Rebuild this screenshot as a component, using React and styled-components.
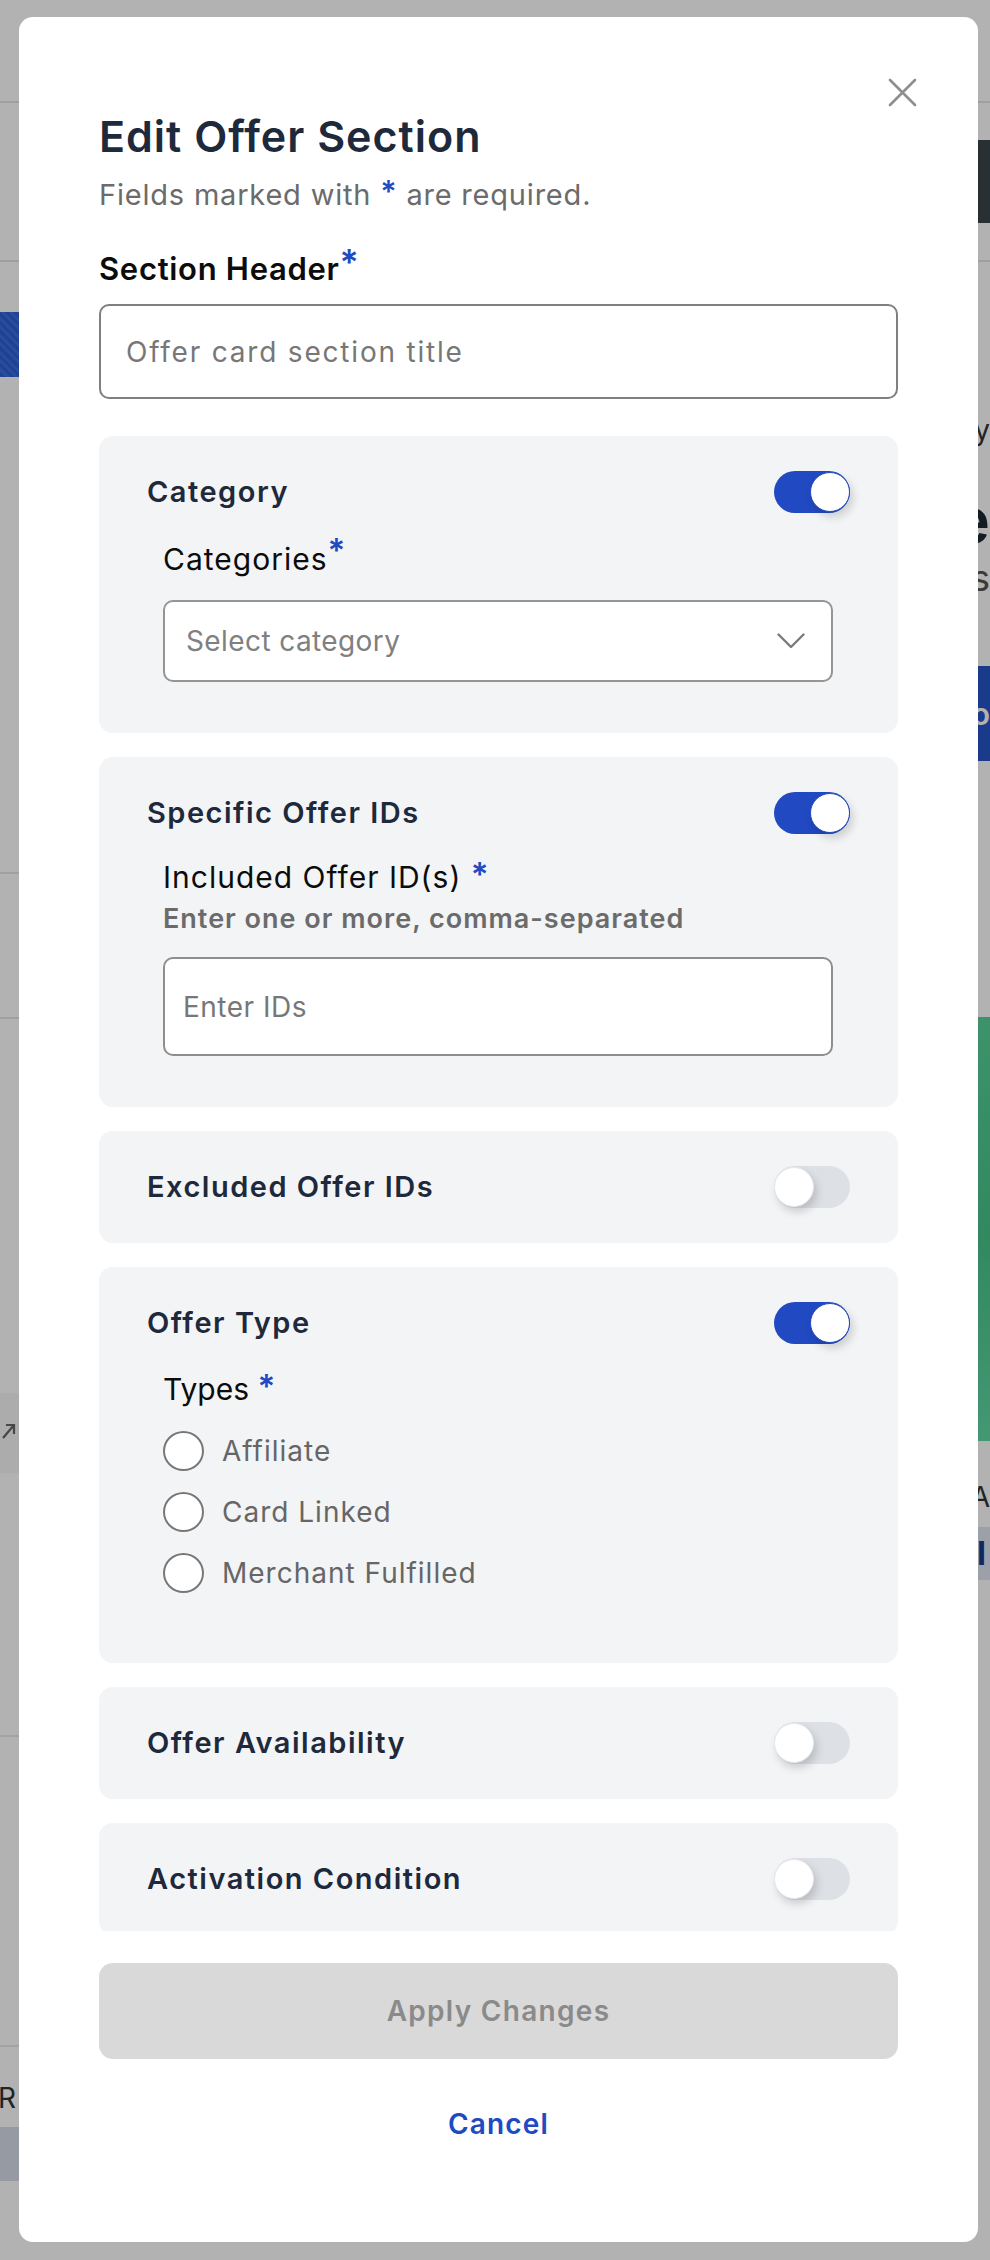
import React from "react"
import styled, { createGlobalStyle } from "styled-components"

const BLUE = "#2149c1"
const INK = "#1e293b"
const MUTED = "#6b6b6b"

const GlobalStyle = createGlobalStyle`
  html, body {
    margin: 0;
    padding: 0;
  }
  body {
    font-family: Inter, "Noto Sans", sans-serif;
    background: #fff;
    overflow: hidden;
  }
  * {
    box-sizing: border-box;
  }
`

/* ---------- the page behind the dialog ---------- */

const Page = styled.div`
  width: 990px;
  height: 2260px;
  overflow: hidden;
  background: #fff;
  display: flex;
  flex-direction: column;
`

const TopNav = styled.header`
  height: 103px;
  flex-shrink: 0;
  border-bottom: 2px solid #e4e4e4;
`

const SubBar = styled.div`
  height: 159px;
  flex-shrink: 0;
  border-bottom: 2px solid #e4e4e4;
  display: flex;
  align-items: center;
  justify-content: flex-end;
`

const DarkPill = styled.div`
  width: 150px;
  height: 83px;
  background: #3a454b;
  border-radius: 10px;
  margin-right: -20px;
`

const Content = styled.main`
  flex: 1;
  display: flex;
  justify-content: space-between;
`

const LeftRail = styled.div`
  width: 160px;
  margin-left: -130px;
  display: flex;
  flex-direction: column;
`

const RightRail = styled.div`
  width: 260px;
  display: flex;
  flex-direction: column;
`

const HeroImage = styled.div`
  margin-top: 50px;
  height: 65px;
  background: repeating-linear-gradient(45deg, #3a6fe2 0 3px, #2f5fd0 3px 6px);
`

const Rule = styled.div`
  margin-top: ${(p) => p.$top}px;
  border-top: 2px solid #e6e6e6;
`

const IconBand = styled.div`
  margin-top: 374px;
  height: 80px;
  background: #f6f6f6;
  display: flex;
  align-items: center;
  justify-content: flex-end;
  padding-right: 14px;
`

const GhostCard = styled.div`
  margin-top: 262px;
  height: 312px;
  border: 2px solid #e8e8e8;
  border-radius: 14px;
`

const RailText = styled.div`
  margin-top: ${(p) => p.$top || 0}px;
  font-size: ${(p) => p.$size}px;
  line-height: ${(p) => p.$lh}px;
  font-weight: ${(p) => p.$weight || 400};
  color: ${(p) => p.$color || "#333"};
  text-align: ${(p) => p.$align || "left"};
  padding-left: ${(p) => p.$indent || 0}px;
  white-space: nowrap;
`

const Chip = styled.div`
  margin-top: 12px;
  height: 54px;
  background: #d7dde9;
  border-radius: 8px;
`

const BlueBlock = styled.div`
  margin-top: 66px;
  height: 95px;
  background: #2653c8;
  border-radius: 10px 0 0 10px;
  color: #fff;
  font-size: 30px;
  font-weight: 600;
  display: flex;
  align-items: center;
  justify-content: flex-end;
`

const GreenImage = styled.div`
  margin-top: 256px;
  height: 424px;
  background: linear-gradient(160deg, #5fd8a0, #48c48a 60%, #62d9a5);
`

const Tag = styled.div`
  margin-top: 15px;
  height: 53px;
  background: #dfe5f2;
  color: #1c3a8f;
  font-size: 32px;
  font-weight: 700;
  display: flex;
  align-items: center;
  justify-content: flex-end;
  padding-right: 4px;
`

/* ---------- dialog ---------- */

const Backdrop = styled.div`
  position: fixed;
  inset: 0;
  background: rgba(0, 0, 0, 0.3);
  padding: 17px 12px 18px 19px;
`

const Dialog = styled.section`
  position: relative;
  width: 959px;
  height: 2225px;
  background: #fff;
  border-radius: 14px;
  padding: 94px 80px 101px;
  display: flex;
  flex-direction: column;
`

const CloseButton = styled.button`
  position: absolute;
  top: 61px;
  right: 61px;
  width: 29px;
  height: 29px;
  padding: 0;
  border: none;
  background: none;
  display: flex;
`

const Title = styled.h2`
  margin: 0;
  font-size: 43px;
  line-height: 50px;
  font-weight: 600;
  letter-spacing: 1px;
  color: ${INK};
`

const Subtitle = styled.p`
  margin: 17px 0 0;
  font-size: 29px;
  line-height: 34px;
  letter-spacing: 0.8px;
  color: ${MUTED};
`

const Req = styled.span`
  color: ${BLUE};
  font-weight: 600;
  font-size: ${(p) => p.$size || "1em"};
  vertical-align: ${(p) => p.$raise || 0}px;
  line-height: 0;
`

const ScrollArea = styled.div`
  flex: 1;
  min-height: 0;
  overflow: hidden;
  padding-top: 39px;
`

const HeaderLabel = styled.label`
  display: block;
  font-size: 31px;
  line-height: 36px;
  font-weight: 600;
  letter-spacing: 0.7px;
  color: #0c0c0c;
`

const TextInput = styled.input`
  display: block;
  width: 100%;
  height: ${(p) => p.$h}px;
  margin-top: ${(p) => p.$top}px;
  padding: 0 ${(p) => p.$pad}px;
  border: 2px solid ${(p) => p.$border || "#7f7f7f"};
  border-radius: 10px;
  background: #fff;
  font-family: inherit;
  font-size: 28px;
  letter-spacing: ${(p) => p.$ls}px;
  color: #111;
  outline: none;

  &::placeholder {
    color: #777;
  }
`

const CardList = styled.div`
  margin-top: 37px;
  display: flex;
  flex-direction: column;
  gap: 24px;
`

const Card = styled.div`
  background: #f3f4f6;
  border-radius: 14px;
  padding: 35px 48px;
`

const CardHead = styled.div`
  height: 42px;
  display: flex;
  align-items: center;
  justify-content: space-between;
`

const CardTitle = styled.h3`
  margin: 0;
  font-size: 29px;
  line-height: 34px;
  font-weight: 600;
  letter-spacing: 1.5px;
  color: ${INK};
`

const Switch = styled.span`
  width: 76px;
  height: 42px;
  border-radius: 21px;
  padding: 1px 0;
  background: ${(p) => (p.$on ? BLUE : "#dde0e5")};
  display: flex;
  align-items: center;
  justify-content: ${(p) => (p.$on ? "flex-end" : "flex-start")};
`

const Knob = styled.span`
  width: 40px;
  height: 40px;
  border-radius: 50%;
  background: #fff;
  border: 1.5px solid ${(p) => (p.$on ? BLUE : "#e6e8ec")};
  box-shadow: 3px 5px 9px rgba(0, 0, 0, 0.16);
`

const CardBody = styled.div`
  margin-top: ${(p) => p.$top}px;
  margin-bottom: ${(p) => p.$tail}px;
  padding: 0 17px 0 16px;
`

const FieldLabel = styled.div`
  font-size: 30px;
  line-height: 34px;
  letter-spacing: ${(p) => p.$ls ?? 1}px;
  color: #0c0c0c;
`

const Helper = styled.div`
  margin-top: 10px;
  font-size: 27px;
  line-height: 30px;
  font-weight: 600;
  letter-spacing: 1px;
  color: ${MUTED};
`

const SelectBox = styled.div`
  margin-top: 24px;
  height: 82px;
  border: 2px solid #959595;
  border-radius: 10px;
  background: #fff;
  padding: 0 26px 0 21px;
  display: flex;
  align-items: center;
  justify-content: space-between;
  font-size: 28px;
  letter-spacing: 0.4px;
  color: #808080;
`

const RadioGroup = styled.div`
  margin-top: 25px;
  display: flex;
  flex-direction: column;
  gap: 21px;
`

const RadioRow = styled.label`
  display: flex;
  align-items: center;
  gap: 18px;
  font-size: 28px;
  line-height: 34px;
  letter-spacing: 1px;
  color: #666;
`

const RadioCircle = styled.span`
  width: 41px;
  height: 40px;
  border-radius: 50%;
  border: 2px solid #777;
  background: #fff;
  flex-shrink: 0;
`

const Footer = styled.div`
  flex-shrink: 0;
  padding-top: 32px;
  display: flex;
  flex-direction: column;
  align-items: stretch;
`

const ApplyButton = styled.button`
  height: 96px;
  border: none;
  border-radius: 14px;
  background: #d9d9d9;
  font-family: inherit;
  font-size: 28px;
  font-weight: 600;
  letter-spacing: 1.3px;
  color: #8a8a8a;
`

const CancelLink = styled.button`
  margin-top: 48px;
  height: 34px;
  border: none;
  background: none;
  padding: 0;
  font-family: inherit;
  font-size: 28px;
  line-height: 34px;
  font-weight: 600;
  letter-spacing: 1.2px;
  color: ${BLUE};
  text-align: center;
`

const Toggle = ({ on }) => (
  <Switch $on={on}>
    <Knob $on={on} />
  </Switch>
)

const CloseIcon = () => (
  <svg width="29" height="29" viewBox="0 0 29 29" fill="none">
    <path d="M2 2L27 27M27 2L2 27" stroke="#8e8e8e" strokeWidth="2.6" strokeLinecap="round" />
  </svg>
)

const Chevron = () => (
  <svg width="28" height="16" viewBox="0 0 28 16" fill="none">
    <path d="M1.5 1.5L14 14L26.5 1.5" stroke="#7b7b7b" strokeWidth="2.4" strokeLinecap="round" strokeLinejoin="round" />
  </svg>
)

const ExternalIcon = () => (
  <svg width="14" height="22" viewBox="0 0 14 22" fill="none">
    <path d="M4 3H12V12M12 3L1 16" stroke="#666" strokeWidth="2.2" />
  </svg>
)

const Section = ({ title, on, children, top, tail }) => (
  <Card>
    <CardHead>
      <CardTitle>{title}</CardTitle>
      <Toggle on={on} />
    </CardHead>
    {on && (
      <CardBody $top={top} $tail={tail}>
        {children}
      </CardBody>
    )}
  </Card>
)

const offerTypes = ["Affiliate", "Card Linked", "Merchant Fulfilled"]

export default function App() {
  return (
    <>
      <GlobalStyle />
      <Page>
        <TopNav />
        <SubBar>
          <DarkPill />
        </SubBar>
        <Content>
          <LeftRail>
            <HeroImage />
            <Rule $top={495} />
            <Rule $top={143} />
            <IconBand>
              <ExternalIcon />
            </IconBand>
            <GhostCard />
            <RailText $top={34} $size={28} $lh={34} $indent={128}>
              R
            </RailText>
            <Chip />
          </LeftRail>
          <RightRail>
            <RailText $top={150} $size={28} $lh={36} $align="right">
              Weekly
            </RailText>
            <RailText $top={36} $size={64} $lh={72} $weight={600} $color="#1c2733" $align="right">
              Save
            </RailText>
            <RailText $size={36} $lh={44} $color="#555" $align="right">
              offers
            </RailText>
            <BlueBlock>Go</BlueBlock>
            <GreenImage />
            <RailText $top={41} $size={28} $lh={30} $align="right">
              AA
            </RailText>
            <Tag>I</Tag>
          </RightRail>
        </Content>
      </Page>

      <Backdrop>
        <Dialog>
          <CloseButton aria-label="Close">
            <CloseIcon />
          </CloseButton>
          <Title>Edit Offer Section</Title>
          <Subtitle>
            Fields marked with <Req $size="1.05em" $raise={3}>*</Req> are required.
          </Subtitle>

          <ScrollArea>
            <HeaderLabel>
              Section Header<Req $size="1.15em" $raise={5}>*</Req>
            </HeaderLabel>
            <TextInput $h={95} $top={17} $pad={25} $ls={1.8} placeholder="Offer card section title" />

            <CardList>
              <Section title="Category" on top={29} tail={16}>
                <FieldLabel>
                  Categories<Req $size="1.1em" $raise={8}>*</Req>
                </FieldLabel>
                <SelectBox>
                  <span>Select category</span>
                  <Chevron />
                </SelectBox>
              </Section>

              <Section title="Specific Offer IDs" on top={26} tail={16}>
                <FieldLabel>
                  Included Offer ID(s) <Req $size="1.1em" $raise={2}>*</Req>
                </FieldLabel>
                <Helper>Enter one or more, comma-separated</Helper>
                <TextInput $h={99} $top={23} $pad={18} $ls={0.5} $border="#8e8e8e" placeholder="Enter IDs" />
              </Section>

              <Section title="Excluded Offer IDs" />

              <Section title="Offer Type" on top={28} tail={35}>
                <FieldLabel $ls={0}>
                  Types <Req $size="1.1em" $raise={2}>*</Req>
                </FieldLabel>
                <RadioGroup>
                  {offerTypes.map((t) => (
                    <RadioRow key={t}>
                      <RadioCircle />
                      {t}
                    </RadioRow>
                  ))}
                </RadioGroup>
              </Section>

              <Section title="Offer Availability" />
              <Section title="Activation Condition" />
            </CardList>
          </ScrollArea>

          <Footer>
            <ApplyButton disabled>Apply Changes</ApplyButton>
            <CancelLink>Cancel</CancelLink>
          </Footer>
        </Dialog>
      </Backdrop>
    </>
  )
}
